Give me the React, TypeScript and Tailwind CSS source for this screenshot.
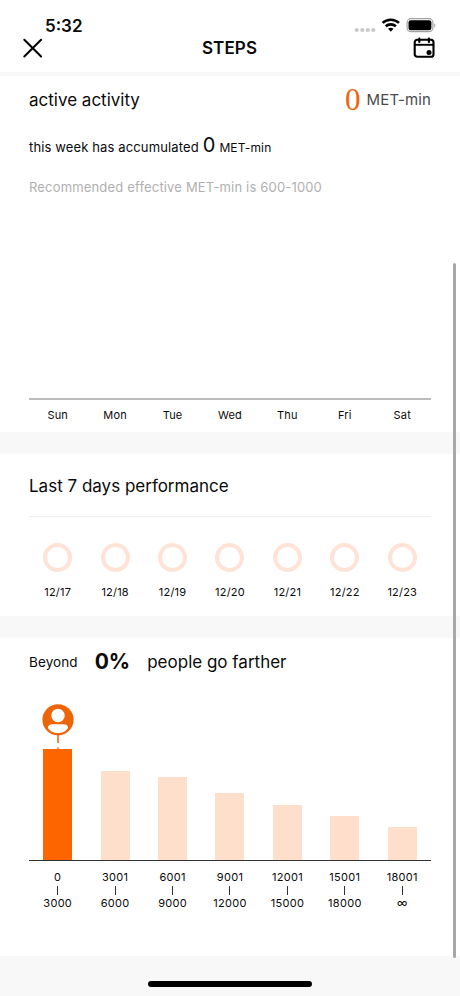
import React from "react";

const days = ["Sun", "Mon", "Tue", "Wed", "Thu", "Fri", "Sat"];
const dates = ["12/17", "12/18", "12/19", "12/20", "12/21", "12/22", "12/23"];
const bars = [
  { from: "0", to: "3000", height: 111 },
  { from: "3001", to: "6000", height: 89 },
  { from: "6001", to: "9000", height: 83.5 },
  { from: "9001", to: "12000", height: 67 },
  { from: "12001", to: "15000", height: 55.5 },
  { from: "15001", to: "18000", height: 44.5 },
  { from: "18001", to: "∞", height: 33.5 },
];

function StatusIcons() {
  return (
    <svg width="84" height="20" viewBox="0 0 84 20" className="block">
      <g fill="#c9c9c9">
        <circle cx="3.8" cy="14" r="2.1" />
        <circle cx="9.3" cy="14" r="2.1" />
        <circle cx="14.8" cy="14" r="2.1" />
        <circle cx="20.3" cy="14" r="2.1" />
      </g>
      <g fill="none" stroke="#000" strokeWidth="2.6">
        <path d="M29.6 6.900a12.200 12.200 0 0 1 16.400 0" />
        <path d="M32.700 10.300a7.600 7.600 0 0 1 10.200 0" />
      </g>
      <path d="M35.100 12.800a4.200 4.200 0 0 1 5.400 0L37.800 15.700z" fill="#000" />
      <rect x="54.100" y="2.700" width="25.800" height="13" rx="3.900" fill="none" stroke="#a3a3a3" strokeWidth="1.200" />
      <rect x="55.500" y="4.300" width="22.900" height="9.900" rx="2.200" fill="#000" />
      <path d="M81.200 7.400c1.600.5 1.600 3.500 0 4z" fill="#a3a3a3" />
    </svg>
  );
}

function CalendarIcon() {
  return (
    <svg width="24" height="24" viewBox="0 0 24 24" className="block" fill="none" stroke="#000" strokeWidth="2.100">
      <rect x="2.700" y="3.800" width="18.800" height="17" rx="2.600" />
      <path d="M2.700 8.800h18.800" strokeWidth="1.900" />
      <path d="M7.300 2.700v3.200M16.900 2.700v3.200" strokeLinecap="round" strokeWidth="2.200" />
      <circle cx="17" cy="16.400" r="2.500" fill="#000" stroke="none" />
    </svg>
  );
}

function Marker() {
  return (
    <svg width="32" height="46" viewBox="0 0 32 46" className="block shrink-0">
      <circle cx="16" cy="16.800" r="15.600" fill="#ee6508" />
      <circle cx="16" cy="12.500" r="6.700" fill="#fff" />
      <path d="M10.500 21.300h11c3 0 4.700 1.600 4.500 3.600-1.800 3-5.600 5-10 5s-8.200-2-10-5c-.2-2 1.500-3.600 4.500-3.600z" fill="#fff" />
      <path d="M16 32v8M16 44.500v1.500" stroke="#ee6508" strokeWidth="1.500" />
    </svg>
  );
}

export default function App() {
  return (
    <div className="relative flex h-[996px] w-[460px] flex-col overflow-hidden bg-[#f8f8f8] font-['Inter',sans-serif] text-[#0a0a0a]">
      <header className="h-[72px] shrink-0 bg-white pt-4">
        <div className="flex h-5 items-center justify-between pr-[23px] pl-[45px]">
          <span className="text-[17px] leading-5 font-semibold">5:32</span>
          <StatusIcons />
        </div>
        <div className="grid h-6 grid-cols-3 items-center pr-6 pl-[22px]">
          <svg width="22" height="22" viewBox="0 0 22 22" className="block" stroke="#000" strokeWidth="2" strokeLinecap="round">
            <path d="M2.300 2.700l16.800 16.800M19.100 2.700L2.300 19.500" />
          </svg>
          <h1 className="pl-px text-center text-[17px] leading-6 font-semibold tracking-[0.1px]">STEPS</h1>
          <div className="flex justify-end">
            <CalendarIcon />
          </div>
        </div>
      </header>

      <section className="mt-1 h-[356px] shrink-0 bg-white px-[29px] pt-2">
        <div className="flex h-8 items-center justify-between">
          <h2 className="text-[17px] leading-8">active activity</h2>
          <div className="flex items-center gap-[6px]">
            <span className="font-['Liberation_Serif',serif] text-[31px] leading-8 text-[#f2640a]">0</span>
            <span className="text-[15px] leading-8 tracking-[0.1px] text-[#4a4a4a]">MET-min</span>
          </div>
        </div>
        <div className="mt-[13px] flex h-8 items-baseline whitespace-nowrap">
          <span className="text-[13px] tracking-[0.13px]">this week has accumulated</span>
          <span className="ml-[4px] text-[20px] leading-8">0</span>
          <span className="ml-[4px] text-[12px] tracking-[0.15px]">MET-min</span>
        </div>
        <p className="mt-[16px] text-[13px] leading-5 tracking-[0.17px] whitespace-nowrap text-[#b0b0b0]">
          Recommended effective MET-min is 600-1000
        </p>
        <div className="mt-[201px] h-[2px] bg-[#bcbcbc]" />
        <div className="mt-[5px] grid grid-cols-7 text-center text-[11px] leading-5 tracking-[0.2px]">
          {days.map((d) => (
            <span key={d}>{d}</span>
          ))}
        </div>
      </section>

      <section className="mt-[22px] h-[162px] shrink-0 bg-white px-[29px] pt-5">
        <h2 className="text-[17px] leading-6">Last 7 days performance</h2>
        <div className="mt-[18px] h-px bg-[#eeeeee]" />
        <div className="mt-[26px] grid grid-cols-7">
          {dates.map((d) => (
            <div key={d} className="flex flex-col items-center">
              <div className="size-[29px] rounded-full border-4 border-[#fee3d6]" />
              <span className="mt-[10px] text-[11px] leading-5 tracking-[0.2px]">{d}</span>
            </div>
          ))}
        </div>
      </section>

      <section className="mt-[22px] h-[318px] shrink-0 bg-white px-[29px] pt-[7px]">
        <div className="flex h-[33px] items-center whitespace-nowrap">
          <span className="pt-[2px] text-[13.5px] tracking-[0.1px]">Beyond</span>
          <span className="ml-[17px] text-[21px] leading-8 font-bold">0%</span>
          <span className="ml-[17px] text-[17px] leading-8">people go farther</span>
        </div>
        <div className="grid h-[183px] grid-cols-7 border-b border-[#333333]">
          {bars.map((b, i) => (
            <div key={b.from} className="flex flex-col items-center justify-end">
              {i === 0 && <Marker />}
              <div
                className={i === 0 ? "w-[29px] shrink-0 bg-[#fd6500]" : "w-[29px] shrink-0 bg-[#fedfcc]"}
                style={{ height: b.height }}
              />
            </div>
          ))}
        </div>
        <div className="mt-[9px] grid grid-cols-7 text-center text-[11px] tracking-[0.3px]">
          {bars.map((b) => (
            <div key={b.from} className="flex flex-col items-center">
              <span className="leading-[14px]">{b.from}</span>
              <span className="mt-[2px] mb-px h-[9px] w-px bg-[#333333]" />
              <span className="leading-[14px]">{b.to}</span>
            </div>
          ))}
        </div>
      </section>

      <div className="flex flex-1 justify-center pt-[25px]">
        <div className="h-[6px] w-[164px] rounded-full bg-black" />
      </div>
      <div className="absolute top-[263px] left-[453px] h-[695px] w-[3px] rounded-full bg-[#a8a8a8]" />
    </div>
  );
}
